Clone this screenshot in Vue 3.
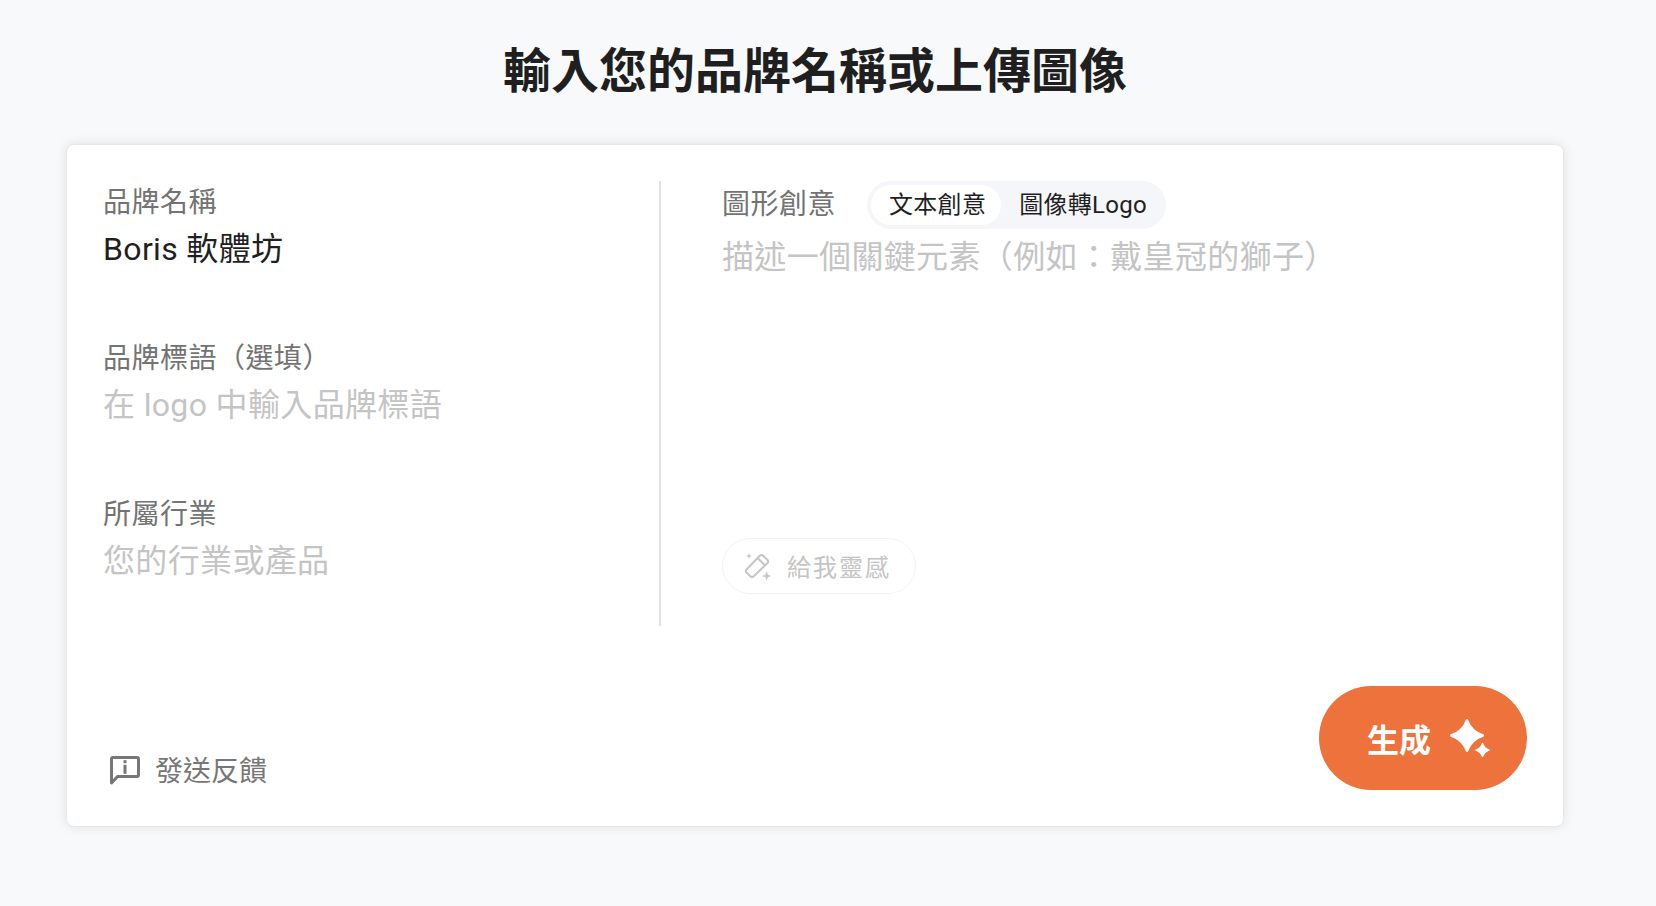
<script setup>
const fields = [
  { label: '品牌名稱', value: 'Boris 軟體坊', filled: true },
  { label: '品牌標語\uFF08選填\uFF09', value: '在 logo 中輸入品牌標語', filled: false },
  { label: '所屬行業', value: '您的行業或產品', filled: false },
]
const idea = '描述一個關鍵元素\uFF08例如\uFF1A戴皇冠的獅子\uFF09'
</script>

<template>
  <main class="page">
    <h1 class="title">輸入您的品牌名稱或上傳圖像</h1>
    <section class="card">
      <div class="columns">
        <div class="left">
          <div v-for="f in fields" :key="f.label" class="field">
            <div class="label">{{ f.label }}</div>
            <div class="value" :class="{ placeholder: !f.filled }">{{ f.value }}</div>
          </div>
        </div>
        <div class="right">
          <div class="head">
            <span class="label">圖形創意</span>
            <div class="toggle">
              <span class="opt active">文本創意</span>
              <span class="opt">圖像轉Logo</span>
            </div>
          </div>
          <div class="value placeholder idea">{{ idea }}</div>
          <button class="inspire">
            <svg width="30" height="30" viewBox="0 0 30 30" fill="none" stroke="#c6c6c6" stroke-width="2" stroke-linejoin="round">
              <path d="M16.5 5 Q18.5 3 20.5 5 L24.5 9 Q26 10.5 24.5 12 L10.5 25.5 Q9 27 7.5 25.5 L3.5 21.5 Q2 20 3.5 18.5 Z" />
              <path d="M14.5 7 L22 14.5" />
              <path d="M6 2 L6.8 4.2 L9 5 L6.8 5.8 L6 8 L5.2 5.8 L3 5 L5.2 4.2 Z" fill="#c6c6c6" stroke="none" />
              <path d="M23.7 20.2 L24.9 23.8 L28.5 25 L24.9 26.2 L23.7 29.8 L22.5 26.2 L18.9 25 L22.5 23.8 Z" fill="#c6c6c6" stroke="none" />
            </svg>
            <span class="inspire-text">給我靈感</span>
          </button>
        </div>
      </div>
      <div class="footer">
        <div class="feedback">
          <svg class="feedback-icon" width="36" height="36" viewBox="0 0 36 36" fill="none">
            <path d="M4.5 30 V6 Q4.5 4.5 6 4.5 H30 Q31.5 4.5 31.5 6 V22 Q31.5 23.5 30 23.5 H10.5 Z" stroke="#777" stroke-width="3" stroke-linejoin="round" />
            <rect x="16.5" y="7.2" width="3" height="3" fill="#777" />
            <rect x="16.5" y="11.8" width="3" height="9" fill="#777" />
          </svg>
          <span>發送反饋</span>
        </div>
        <button class="generate">
          <span>生成</span>
          <svg width="44" height="44" viewBox="0 0 44 44" fill="#fff">
            <path d="M19 4.2 Q23 15.5 34.8 19.5 Q23 23.5 19 34.8 Q15 23.5 3.2 19.5 Q15 15.5 19 4.2 Z" stroke="#fff" stroke-width="2.4" stroke-linejoin="round" />
            <path d="M34.5 27.4 Q36.2 32.4 41 34 Q36.2 35.6 34.5 40.6 Q32.8 35.6 28 34 Q32.8 32.4 34.5 27.4 Z" stroke="#fff" stroke-width="1.4" stroke-linejoin="round" />
          </svg>
        </button>
      </div>
    </section>
  </main>
</template>

<style>
html, body { margin: 0; background: #f8f9fb; }
</style>

<style scoped>
.page {
  box-sizing: border-box;
  width: 1630px;
  height: 906px;
  padding: 0 66px;
  font-family: Roboto, "Noto Sans CJK TC", sans-serif;
  overflow: hidden;
}
.title {
  margin: 0;
  height: 144px;
  padding-top: 38px;
  box-sizing: border-box;
  font-size: 48px;
  line-height: 68px;
  font-weight: 700;
  text-align: center;
  color: #1f1f1f;
}
.card {
  box-sizing: border-box;
  height: 683px;
  background: #fff;
  border: 1px solid #e8e8e8;
  border-radius: 8px;
  box-shadow: 0 0 12px rgba(0, 0, 0, 0.1);
  padding: 36px 36px 36px 36px;
  display: flex;
  flex-direction: column;
  justify-content: space-between;
}
.columns { display: flex; height: 445px; }
.left {
  box-sizing: border-box;
  width: 558px;
  padding-top: 2px;
  border-right: 2px solid #e2e2e2;
  display: flex;
  flex-direction: column;
  gap: 36px;
}
.field { height: 120px; }
.label { font-size: 28px; line-height: 40px; letter-spacing: 0.5px; color: #737373; }
.value { font-size: 32px; line-height: 48px; letter-spacing: 0.35px; color: #1f1f1f; margin-top: 2px; }
.placeholder { color: #c4c4c4; }
.right {
  flex: 1;
  padding-left: 61px;
  display: flex;
  flex-direction: column;
  position: relative;
}
.head { display: flex; align-items: center; gap: 31px; }
.toggle {
  display: flex;
  align-items: center;
  height: 48px;
  box-sizing: border-box;
  padding: 4px;
  background: #f5f6fa;
  border-radius: 24px;
}
.opt {
  font-size: 24px;
  line-height: 40px;
  letter-spacing: 0.3px;
  padding: 0 15px 0 18px;
  color: #1f1f1f;
  border-radius: 20px;
}
.active { background: #fff; }
.idea { margin-top: 4px; }
.inspire {
  margin-top: auto;
  margin-bottom: 32px;
  align-self: flex-start;
  display: flex;
  align-items: center;
  gap: 14px;
  height: 56px;
  padding: 0 24px 0 20px;
  background: #fff;
  border: 1px solid #f3f3f3;
  border-radius: 28px;
  font: inherit;
  font-size: 24px;
  letter-spacing: 2px;
  color: #c4c4c4;
}
.inspire-text { margin-top: -2px; }
.footer { display: flex; justify-content: space-between; align-items: flex-end; }
.feedback {
  display: flex;
  align-items: center;
  gap: 12px;
  padding-left: 4px;
  font-size: 28px;
  color: #777;
  margin-bottom: 1px;
}
.feedback-icon { margin-top: 3px; }
.generate {
  display: flex;
  align-items: center;
  gap: 17px;
  width: 208px;
  height: 104px;
  padding: 0 0 0 48px;
  border: none;
  border-radius: 52px;
  background: #ed723b;
  color: #fff;
  font: inherit;
  font-size: 32px;
  font-weight: 700;
}
</style>
